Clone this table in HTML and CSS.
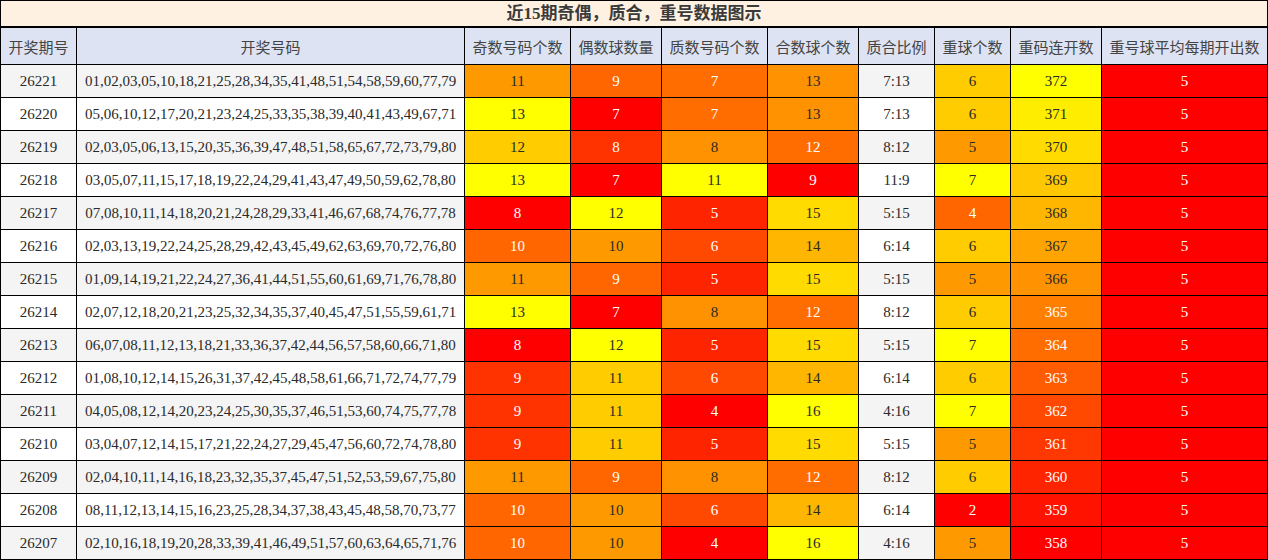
FILE: index.html
```html
<!DOCTYPE html>
<html lang="zh-CN">
<head>
<meta charset="utf-8">
<title>近15期奇偶，质合，重号数据图示</title>
<link rel="stylesheet" href="styles.css">
</head>
<body>
<div class="sheet">
  <div class="title">近15期奇偶，质合，重号数据图示</div>

  <div class="hd">开奖期号</div>
  <div class="hd">开奖号码</div>
  <div class="hd">奇数号码个数</div>
  <div class="hd">偶数球数量</div>
  <div class="hd">质数号码个数</div>
  <div class="hd">合数球个数</div>
  <div class="hd">质合比例</div>
  <div class="hd">重球个数</div>
  <div class="hd">重码连开数</div>
  <div class="hd">重号球平均每期开出数</div>

  <div class="c alt">26221</div><div class="c alt">01,02,03,05,10,18,21,25,28,34,35,41,48,51,54,58,59,60,77,79</div>
  <div class="c dk" style="background:#ff9900">11</div><div class="c lt" style="background:#ff6600">9</div><div class="c lt" style="background:#ff6d00">7</div><div class="c dk" style="background:#ff9200">13</div>
  <div class="c alt">7:13</div><div class="c dk" style="background:#ffcc00">6</div><div class="c dk" style="background:#ffff00">372</div><div class="c lt" style="background:#ff0000">5</div>

  <div class="c">26220</div><div class="c">05,06,10,12,17,20,21,23,24,25,33,35,38,39,40,41,43,49,67,71</div>
  <div class="c dk" style="background:#ffff00">13</div><div class="c lt" style="background:#ff0000">7</div><div class="c lt" style="background:#ff6d00">7</div><div class="c dk" style="background:#ff9200">13</div>
  <div class="c">7:13</div><div class="c dk" style="background:#ffcc00">6</div><div class="c dk" style="background:#ffed00">371</div><div class="c lt" style="background:#ff0000">5</div>

  <div class="c alt">26219</div><div class="c alt">02,03,05,06,13,15,20,35,36,39,47,48,51,58,65,67,72,73,79,80</div>
  <div class="c dk" style="background:#ffcc00">12</div><div class="c lt" style="background:#ff3300">8</div><div class="c dk" style="background:#ff9200">8</div><div class="c lt" style="background:#ff6d00">12</div>
  <div class="c alt">8:12</div><div class="c dk" style="background:#ff9900">5</div><div class="c dk" style="background:#ffdb00">370</div><div class="c lt" style="background:#ff0000">5</div>

  <div class="c">26218</div><div class="c">03,05,07,11,15,17,18,19,22,24,29,41,43,47,49,50,59,62,78,80</div>
  <div class="c dk" style="background:#ffff00">13</div><div class="c lt" style="background:#ff0000">7</div><div class="c dk" style="background:#ffff00">11</div><div class="c lt" style="background:#ff0000">9</div>
  <div class="c">11:9</div><div class="c dk" style="background:#ffff00">7</div><div class="c dk" style="background:#ffc800">369</div><div class="c lt" style="background:#ff0000">5</div>

  <div class="c alt">26217</div><div class="c alt">07,08,10,11,14,18,20,21,24,28,29,33,41,46,67,68,74,76,77,78</div>
  <div class="c lt" style="background:#ff0000">8</div><div class="c dk" style="background:#ffff00">12</div><div class="c lt" style="background:#ff2400">5</div><div class="c dk" style="background:#ffdb00">15</div>
  <div class="c alt">5:15</div><div class="c lt" style="background:#ff6600">4</div><div class="c dk" style="background:#ffb600">368</div><div class="c lt" style="background:#ff0000">5</div>

  <div class="c">26216</div><div class="c">02,03,13,19,22,24,25,28,29,42,43,45,49,62,63,69,70,72,76,80</div>
  <div class="c lt" style="background:#ff6600">10</div><div class="c dk" style="background:#ff9900">10</div><div class="c lt" style="background:#ff4900">6</div><div class="c dk" style="background:#ffb600">14</div>
  <div class="c">6:14</div><div class="c dk" style="background:#ffcc00">6</div><div class="c dk" style="background:#ffa400">367</div><div class="c lt" style="background:#ff0000">5</div>

  <div class="c alt">26215</div><div class="c alt">01,09,14,19,21,22,24,27,36,41,44,51,55,60,61,69,71,76,78,80</div>
  <div class="c dk" style="background:#ff9900">11</div><div class="c lt" style="background:#ff6600">9</div><div class="c lt" style="background:#ff2400">5</div><div class="c dk" style="background:#ffdb00">15</div>
  <div class="c alt">5:15</div><div class="c dk" style="background:#ff9900">5</div><div class="c dk" style="background:#ff9200">366</div><div class="c lt" style="background:#ff0000">5</div>

  <div class="c">26214</div><div class="c">02,07,12,18,20,21,23,25,32,34,35,37,40,45,47,51,55,59,61,71</div>
  <div class="c dk" style="background:#ffff00">13</div><div class="c lt" style="background:#ff0000">7</div><div class="c dk" style="background:#ff9200">8</div><div class="c lt" style="background:#ff6d00">12</div>
  <div class="c">8:12</div><div class="c dk" style="background:#ffcc00">6</div><div class="c lt" style="background:#ff7f00">365</div><div class="c lt" style="background:#ff0000">5</div>

  <div class="c alt">26213</div><div class="c alt">06,07,08,11,12,13,18,21,33,36,37,42,44,56,57,58,60,66,71,80</div>
  <div class="c lt" style="background:#ff0000">8</div><div class="c dk" style="background:#ffff00">12</div><div class="c lt" style="background:#ff2400">5</div><div class="c dk" style="background:#ffdb00">15</div>
  <div class="c alt">5:15</div><div class="c dk" style="background:#ffff00">7</div><div class="c lt" style="background:#ff6d00">364</div><div class="c lt" style="background:#ff0000">5</div>

  <div class="c">26212</div><div class="c">01,08,10,12,14,15,26,31,37,42,45,48,58,61,66,71,72,74,77,79</div>
  <div class="c lt" style="background:#ff3300">9</div><div class="c dk" style="background:#ffcc00">11</div><div class="c lt" style="background:#ff4900">6</div><div class="c dk" style="background:#ffb600">14</div>
  <div class="c">6:14</div><div class="c dk" style="background:#ffcc00">6</div><div class="c lt" style="background:#ff5b00">363</div><div class="c lt" style="background:#ff0000">5</div>

  <div class="c alt">26211</div><div class="c alt">04,05,08,12,14,20,23,24,25,30,35,37,46,51,53,60,74,75,77,78</div>
  <div class="c lt" style="background:#ff3300">9</div><div class="c dk" style="background:#ffcc00">11</div><div class="c lt" style="background:#ff0000">4</div><div class="c dk" style="background:#ffff00">16</div>
  <div class="c alt">4:16</div><div class="c dk" style="background:#ffff00">7</div><div class="c lt" style="background:#ff4900">362</div><div class="c lt" style="background:#ff0000">5</div>

  <div class="c">26210</div><div class="c">03,04,07,12,14,15,17,21,22,24,27,29,45,47,56,60,72,74,78,80</div>
  <div class="c lt" style="background:#ff3300">9</div><div class="c dk" style="background:#ffcc00">11</div><div class="c lt" style="background:#ff2400">5</div><div class="c dk" style="background:#ffdb00">15</div>
  <div class="c">5:15</div><div class="c dk" style="background:#ff9900">5</div><div class="c lt" style="background:#ff3700">361</div><div class="c lt" style="background:#ff0000">5</div>

  <div class="c alt">26209</div><div class="c alt">02,04,10,11,14,16,18,23,32,35,37,45,47,51,52,53,59,67,75,80</div>
  <div class="c dk" style="background:#ff9900">11</div><div class="c lt" style="background:#ff6600">9</div><div class="c dk" style="background:#ff9200">8</div><div class="c lt" style="background:#ff6d00">12</div>
  <div class="c alt">8:12</div><div class="c dk" style="background:#ffcc00">6</div><div class="c lt" style="background:#ff2400">360</div><div class="c lt" style="background:#ff0000">5</div>

  <div class="c">26208</div><div class="c">08,11,12,13,14,15,16,23,25,28,34,37,38,43,45,48,58,70,73,77</div>
  <div class="c lt" style="background:#ff6600">10</div><div class="c dk" style="background:#ff9900">10</div><div class="c lt" style="background:#ff4900">6</div><div class="c dk" style="background:#ffb600">14</div>
  <div class="c">6:14</div><div class="c lt" style="background:#ff0000">2</div><div class="c lt" style="background:#ff1200">359</div><div class="c lt" style="background:#ff0000">5</div>

  <div class="c alt">26207</div><div class="c alt">02,10,16,18,19,20,28,33,39,41,46,49,51,57,60,63,64,65,71,76</div>
  <div class="c lt" style="background:#ff6600">10</div><div class="c dk" style="background:#ff9900">10</div><div class="c lt" style="background:#ff0000">4</div><div class="c dk" style="background:#ffff00">16</div>
  <div class="c alt">4:16</div><div class="c dk" style="background:#ff9900">5</div><div class="c lt" style="background:#ff0000">358</div><div class="c lt" style="background:#ff0000">5</div>
</div>
</body>
</html>
```
FILE: styles.css
```css
html, body {
  margin: 0;
  padding: 0;
  background: #ffffff;
}

body {
  font-family: "Liberation Serif", "Noto Sans CJK SC", serif;
  font-size: 15px;
  color: #333333;
}

.sheet {
  display: grid;
  grid-template-columns: 75px 387px 105px 90px 105px 90px 75px 75px 90px 165px;
  grid-template-rows: 26px 36px repeat(15, 32px);
  gap: 1px;
  padding: 1px;
  width: 1268px;
  box-sizing: border-box;
  background: #000000;
}

.title {
  grid-column: 1 / -1;
  display: flex;
  align-items: center;
  justify-content: center;
  background: #fef1e1;
  border-bottom: 1px solid #000000;
  font-weight: bold;
  font-size: 17px;
  color: #3a3a3a;
  line-height: 1;
}

.hd {
  display: flex;
  align-items: center;
  justify-content: center;
  background: #dde3f2;
  font-family: "Noto Sans CJK SC", sans-serif;
  font-size: 15px;
  color: #444444;
  white-space: nowrap;
}

.c {
  display: flex;
  align-items: center;
  justify-content: center;
  background: #ffffff;
  white-space: nowrap;
  color: #2a2a2a;
}

.c.alt {
  background: #f4f4f4;
}

.c.dk {
  color: #2a2a2a;
}

.c.lt {
  color: #ffffff;
}
```
